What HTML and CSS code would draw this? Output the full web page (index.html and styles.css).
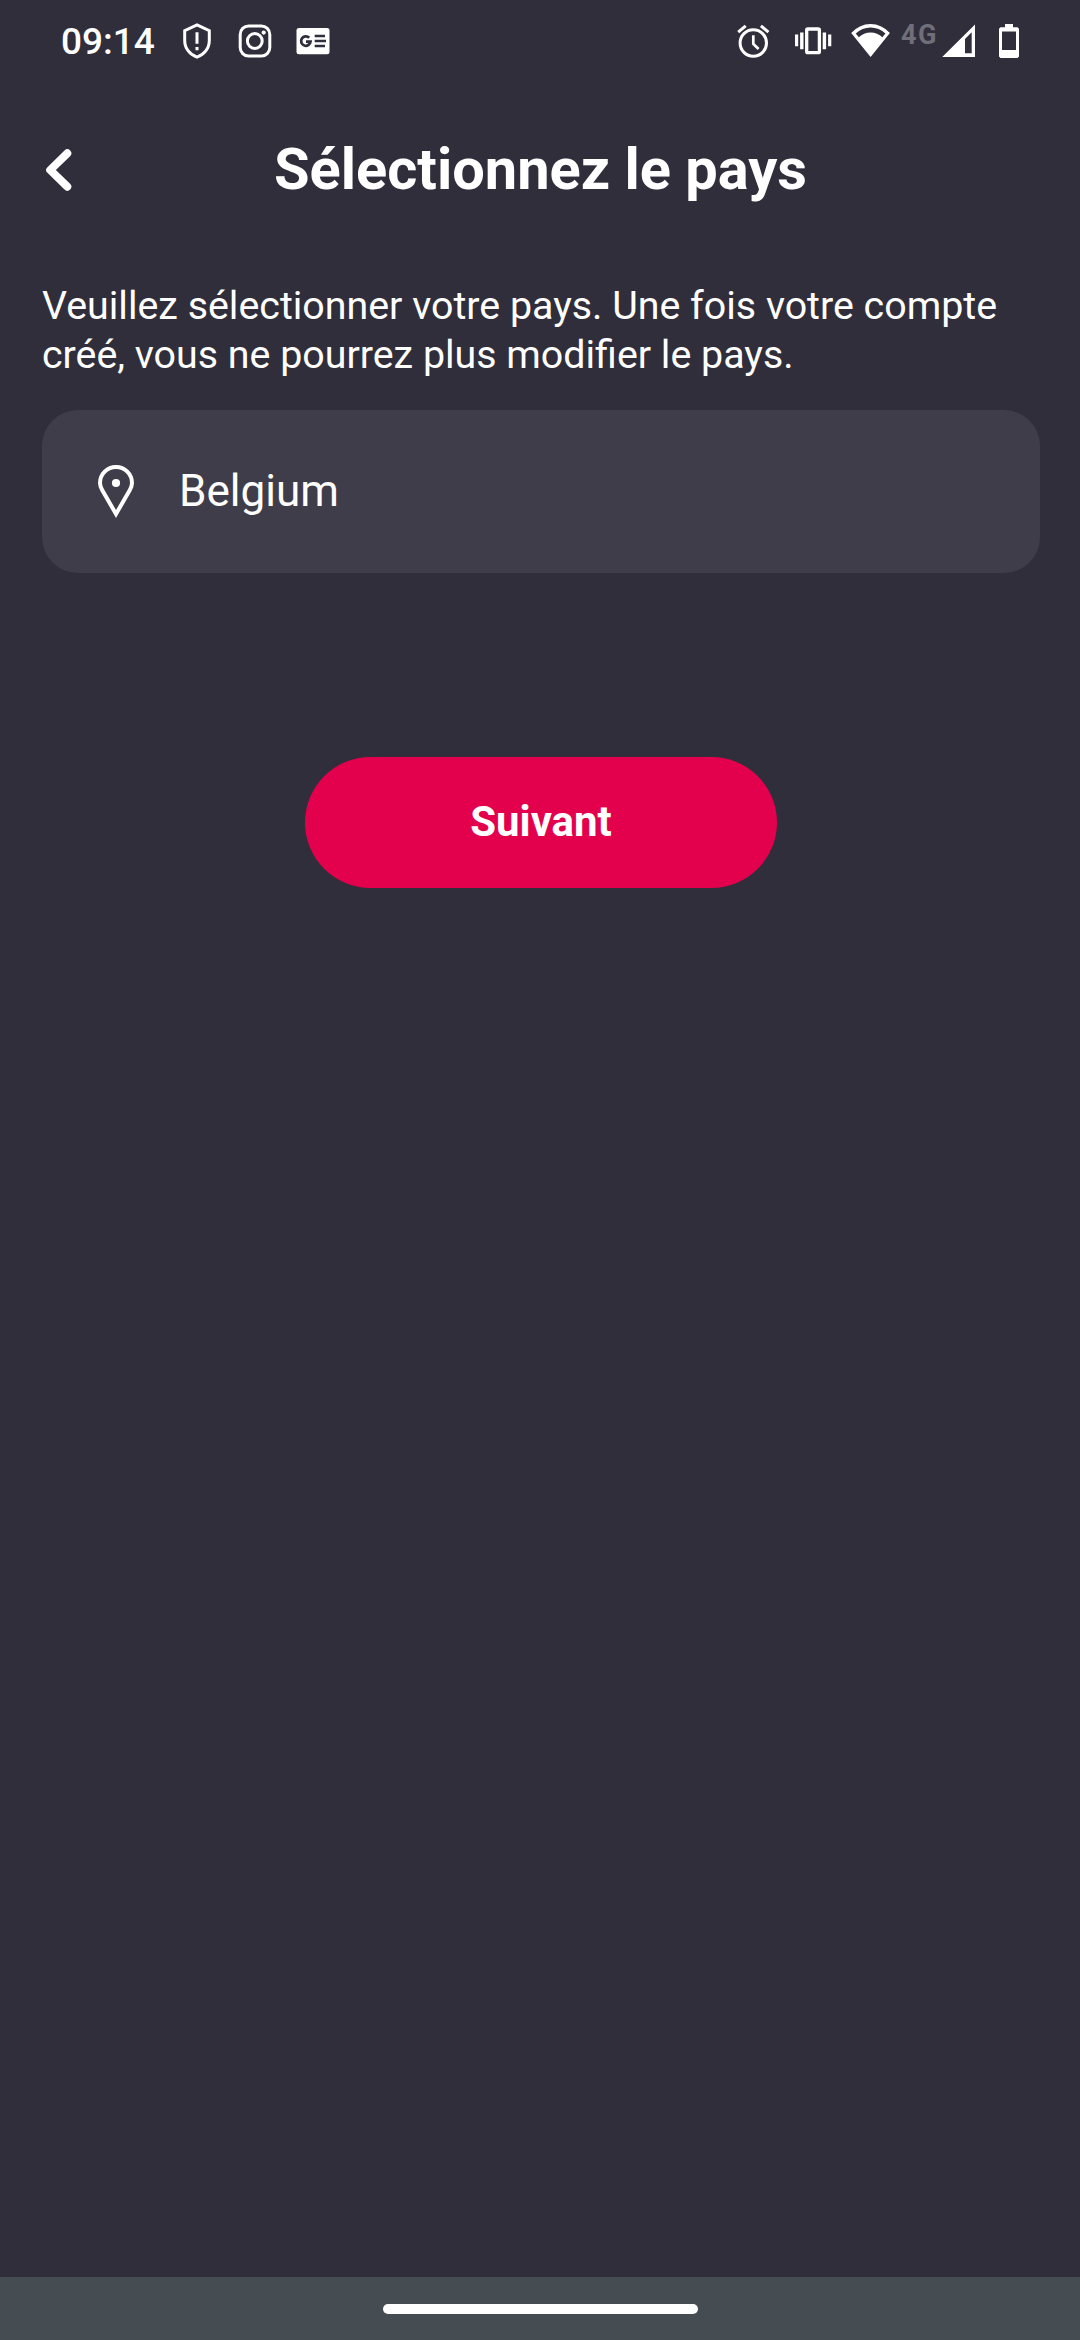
FILE: index.html
```html
<!DOCTYPE html>
<html lang="fr">
<head>
    <meta charset="UTF-8">
    <meta name="viewport" content="width=device-width, initial-scale=1.0">
    <title>Sélectionnez le pays</title>
    <link rel="stylesheet" href="styles.css">
</head>
<body>
<div class="status-bar">
    <span class="clock">09:14</span>
    <div class="notifications">
        <svg width="28" height="36" viewBox="0 0 28 36" fill="none" stroke="#fff" stroke-width="3">
            <path d="M14 1.9L26.3 7.6V17.5C26.3 25.5 21 31.8 14 34.2C7 31.8 1.7 25.5 1.7 17.5V7.6Z"/>
            <path d="M14 9.2V20.8M14 24V27.2"/>
        </svg>
        <svg width="34" height="36" viewBox="0 0 34 36" fill="none" stroke="#fff" stroke-width="3">
            <rect x="2.2" y="2.9" width="29.6" height="30.2" rx="8.5"/>
            <circle cx="16.8" cy="18" r="7.4"/>
            <circle cx="25.7" cy="9.6" r="2.1" fill="#fff" stroke="none"/>
        </svg>
        <svg width="34" height="36" viewBox="0 0 34 36" fill="none" stroke="#312e3c" stroke-width="2.4">
            <rect x="0.5" y="5" width="33" height="26.2" rx="2.5" fill="#fff" stroke="none"/>
            <path d="M13.2 14.8A4.7 4.7 0 1 0 14.5 18.6H10" stroke-width="2.8"/>
            <path d="M18.7 13H29M18.7 18H30M18.7 23H29"/>
        </svg>
    </div>
    <div class="system-icons">
        <svg class="alarm" width="34" height="36" viewBox="0 0 34 36" fill="none" stroke="#fff" stroke-width="3">
            <circle cx="16.3" cy="20" r="13.2"/>
            <path d="M16.3 12.2V21L21.6 26" stroke-width="2.7"/>
            <path d="M1.2 9.2L8.7 2.8M23.9 2.8L31.4 9.2"/>
        </svg>
        <svg class="vibrate" width="38" height="36" viewBox="0 0 38 36" fill="#fff">
            <rect x="12.7" y="6" width="12.7" height="23.6" rx="1.2" fill="none" stroke="#fff" stroke-width="3.3"/>
            <path d="M1 11.4H4.2V23.2H1ZM6.1 9.4H9.5V26.2H6.1ZM28.7 9.4H32.1V26.2H28.7ZM34.1 11.4H37.3V23.2H34.1Z"/>
        </svg>
        <svg class="wifi" width="39" height="36" viewBox="0 0 39 36" fill="#fff">
            <path fill-rule="evenodd" d="M0.2 9.9A25.7 25.7 0 0 1 38.9 9.9L19.6 34ZM4.8 10.6L7.8 14.2A17 17 0 0 1 31.4 14.2L34.4 10.6A20.8 20.8 0 0 0 4.8 10.6Z"/>
        </svg>
        <span class="network">4G</span>
        <svg class="signal" width="34" height="36" viewBox="0 0 34 36" fill="#fff">
            <path fill-rule="evenodd" d="M33 1.5V34H0.2ZM29.7 9.3L23 16V30.3H29.7Z"/>
        </svg>
        <svg class="battery" width="20" height="36" viewBox="0 0 20 36" fill="#fff">
            <path fill-rule="evenodd" d="M6 1H14V4.3H18.5L20 5.8V33.5L18.5 35H1.5L0 33.5V5.8L1.5 4.3H6ZM3 8.5V27H17V8.5Z"/>
        </svg>
    </div>
</div>
<div class="header">
    <svg class="back" width="32" height="50" viewBox="0 0 32 50" fill="none" stroke="#fff" stroke-width="8" stroke-linecap="round" stroke-linejoin="round">
        <path d="M25.3 8.3L8.2 25L25.3 41.7"/>
    </svg>
    <h1>Sélectionnez le pays</h1>
</div>
<div class="content">
    <p class="intro">Veuillez sélectionner votre pays. Une fois votre compte créé, vous ne pourrez plus modifier le pays.</p>
    <div class="country">
        <svg width="38" height="54" viewBox="0 0 38 54" fill="none" stroke="#fff" stroke-width="4">
            <path d="M19 50L5.3 26.2C3.7 23.4 3 21.4 3 19A16 16 0 0 1 35 19C35 21.4 34.3 23.4 32.7 26.2Z"/>
            <circle cx="19" cy="19" r="4.1" fill="#fff" stroke="none"/>
        </svg>
        <span>Belgium</span>
    </div>
    <button class="next-btn">Suivant</button>
</div>
<div class="nav-bar">
    <div class="handle"></div>
</div>
</body>
</html>
```
FILE: styles.css
```css
html, body {
    height: 100%;
    margin: 0;
    padding: 0;
}

body {
    display: flex;
    flex-direction: column;
    background-color: #312e3c;
    color: #fff;
    font-family: Roboto, sans-serif;
}

svg {
    display: block;
    flex-shrink: 0;
}

.status-bar {
    display: flex;
    align-items: center;
    height: 82px;
    padding: 0 61px;
}

.clock {
    width: 122px;
    padding-top: 2px;
    font-size: 37px;
    font-weight: 500;
    line-height: 80px;
}

.notifications {
    display: flex;
    gap: 27px;
}

.notifications svg:last-child {
    margin-left: -3px;
}

.system-icons {
    display: flex;
    align-items: center;
    margin-left: auto;
}

.vibrate {
    margin-left: 23px;
}

.wifi {
    margin-left: 19px;
}

.network {
    width: 40px;
    margin: 0 1px 13px 11px;
    color: #706e78;
    font-size: 27px;
    font-weight: 700;
    letter-spacing: 1.4px;
    line-height: 30px;
}

.battery {
    margin-left: 23px;
}

.header {
    display: grid;
    grid-template-columns: 42px 1fr 42px;
    align-items: center;
    height: 176px;
    padding: 0 41px 0 42px;
}

h1 {
    margin: 0 0 2px;
    font-size: 57.75px;
    font-weight: 700;
    line-height: 68px;
    text-align: center;
}

.content {
    display: flex;
    flex: 1;
    flex-direction: column;
    padding: 23px 40px 0 42px;
}

.intro {
    margin: 0 0 31px;
    font-size: 39.375px;
    line-height: 49px;
}

.country {
    display: flex;
    align-items: center;
    gap: 44px;
    height: 163px;
    padding: 0 0 2px 55px;
    box-sizing: border-box;
    border-radius: 36px;
    background-color: #403d4a;
    font-size: 44.1px;
}

.next-btn {
    align-self: center;
    width: 472px;
    height: 131px;
    margin-top: 184px;
    padding: 0 0 2px;
    border: none;
    border-radius: 66px;
    background-color: #e3004c;
    color: #fff;
    font-family: inherit;
    font-size: 42px;
    font-weight: 700;
}

.nav-bar {
    display: flex;
    justify-content: center;
    height: 63px;
    background-color: #464d52;
}

.handle {
    width: 315px;
    height: 10px;
    margin-top: 27px;
    border-radius: 5px;
    background-color: #fff;
}
```
